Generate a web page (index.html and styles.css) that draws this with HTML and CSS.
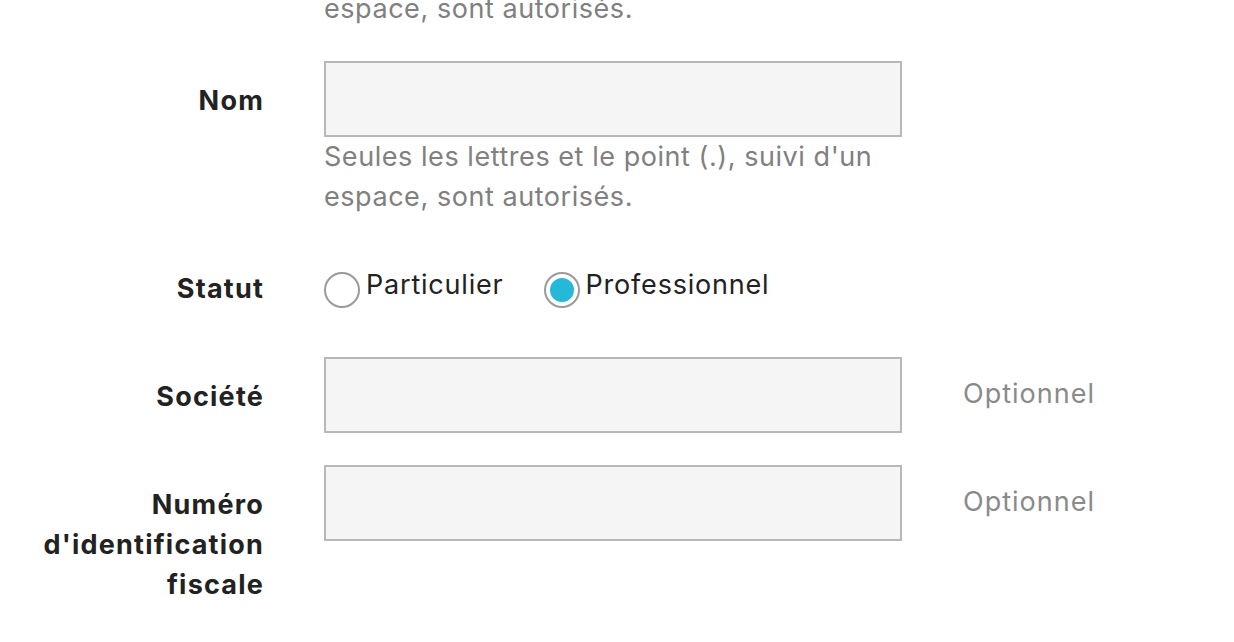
FILE: index.html
```html
<!DOCTYPE html>
<html lang="fr">
<head>
<meta charset="utf-8">
<title>Formulaire</title>
<link rel="stylesheet" href="styles.css">
</head>
<body>
<form class="form">
  <div class="hint hint-top">espace, sont autorisés.</div>

  <div class="row">
    <label class="label">Nom</label>
    <div class="field">
      <input class="input" type="text">
      <div class="hint">Seules les lettres et le point (.), suivi d'un espace, sont autorisés.</div>
    </div>
    <div class="aside"></div>
  </div>

  <div class="row">
    <label class="label">Statut</label>
    <div class="field radios">
      <label class="radio"><span class="dot"></span><span class="radio-text">Particulier</span></label>
      <label class="radio checked"><span class="dot"></span><span class="radio-text">Professionnel</span></label>
    </div>
    <div class="aside"></div>
  </div>

  <div class="row">
    <label class="label">Société</label>
    <div class="field">
      <input class="input" type="text">
    </div>
    <div class="aside">Optionnel</div>
  </div>

  <div class="row">
    <label class="label">Numéro d'identification fiscale</label>
    <div class="field">
      <input class="input" type="text">
    </div>
    <div class="aside">Optionnel</div>
  </div>
</form>
</body>
</html>
```

FILE: styles.css
```css
html, body {
  margin: 0;
  padding: 0;
  background: #ffffff;
}
body {
  font-family: Inter, "Noto Sans", sans-serif;
  font-size: 27px;
  line-height: 40px;
  color: #222222;
  letter-spacing: 0.8px;
}
.form {
  display: flex;
  flex-direction: column;
  gap: 32px;
  padding-left: 324px;
  margin-top: -11px;
}
.hint {
  color: #808080;
  width: 578px;
  letter-spacing: 0.55px;
}
.row {
  display: grid;
  grid-template-columns: 230px 578px auto;
  column-gap: 61px;
  margin-left: -291px;
  align-items: start;
}
.label {
  text-align: right;
  font-weight: 700;
  padding-top: 20px;
  margin-right: -1px;
  letter-spacing: 1.2px;
}
.field {
  display: flex;
  flex-direction: column;
}
.input {
  box-sizing: border-box;
  width: 578px;
  height: 76px;
  margin: 0;
  border: 2px solid #b8b8b8;
  background: #f5f5f5;
  font: inherit;
}
.aside {
  padding-top: 17px;
  color: #8a8a8a;
  letter-spacing: 1px;
}
.radios {
  flex-direction: row;
  align-items: center;
  gap: 40px;
  height: 76px;
}
.radio {
  display: flex;
  align-items: center;
  gap: 6px;
}
.radio-text {
  margin-top: -4px;
}
.dot {
  box-sizing: border-box;
  width: 36px;
  height: 36px;
  border-radius: 50%;
  border: 2px solid #9a9a9a;
  background: #ffffff;
  position: relative;
  margin-top: 6px;
}
.checked .dot::after {
  content: "";
  position: absolute;
  left: 4px;
  top: 4px;
  width: 24px;
  height: 24px;
  border-radius: 50%;
  background: #26b8d9;
}
```
